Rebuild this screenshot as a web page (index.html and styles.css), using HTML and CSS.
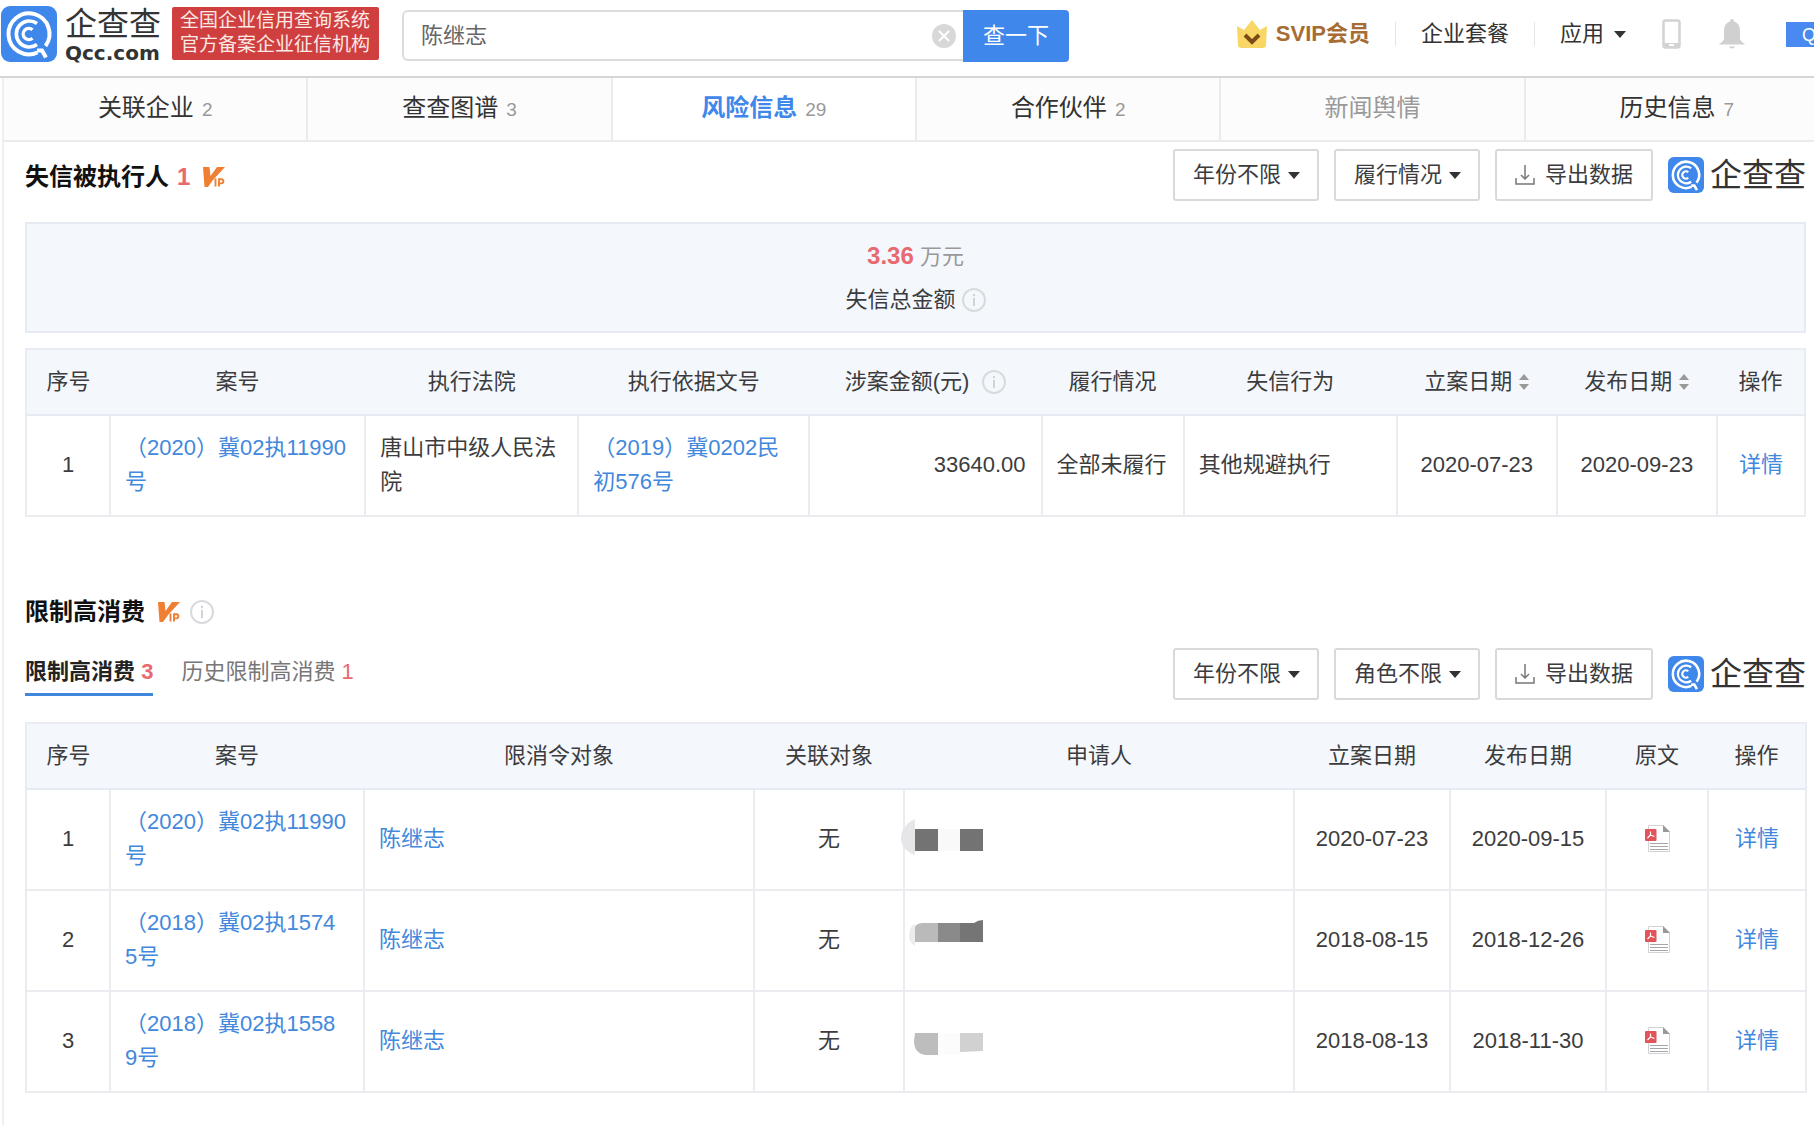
FILE: index.html
```html
<!DOCTYPE html>
<html lang="zh-CN">
<head>
<meta charset="utf-8">
<title>企查查 - 风险信息</title>
<meta name="viewport" content="width=device-width, initial-scale=1">
<link rel="stylesheet" href="styles.css">
</head>
<body>
<svg class="defs" aria-hidden="true">
  <symbol id="logo" viewBox="0 0 56 56">
    <rect width="56" height="56" rx="9" fill="#3f87ea"/>
    <g fill="none" stroke="#fff">
      <path d="M36.500 46.500A20.500 20.500 0 1 1 44.500 40" stroke-width="4"/>
      <path d="M36 38.500A13 13 0 1 1 36 17.500" stroke-width="3.600"/>
      <path d="M31.500 32.200A5.600 5.600 0 1 1 31.500 23.800" stroke-width="3.400"/>
      <path d="M36 44.500h5l4 7" stroke-width="4"/>
    </g>
  </symbol>
  <symbol id="vip" viewBox="0 0 22 20">
    <path d="M0 0h6.500l1 9L14 0h8L10 13l-5 7H1.500z" fill="#ee7f33"/>
    <path d="M12.500 11.500V19.500M16 19.500v-7.300h2.300a2 2 0 0 1 0 4.200H16" fill="none" stroke="#ee7f33" stroke-width="1.900"/>
  </symbol>
  <symbol id="info" viewBox="0 0 24 24">
    <circle cx="12" cy="12" r="11" fill="none" stroke="#d8dadd" stroke-width="2"/>
    <path d="M12 6v2.200M12 10v8" stroke="#d0d2d6" stroke-width="2"/>
  </symbol>
  <symbol id="download" viewBox="0 0 20 20">
    <path d="M10 0v14M6 10l4 4 4-4M1 13v6h18v-6" fill="none" stroke="#777" stroke-width="1.500"/>
  </symbol>
  <symbol id="pdf" viewBox="0 0 25 27">
    <path d="M3.500.5H18l6.500 6.500v19.500h-21z" fill="#fff" stroke="#d2d2d4"/>
    <path d="M18 0v7h7z" fill="#98989b"/>
    <rect y="4" width="11.500" height="12" rx="1" fill="#e25459"/>
    <path d="M5.500 6.500v3.500L2.500 13M5.500 10l4 1.500" fill="none" stroke="#fff" stroke-width="1.200"/>
    <path d="M5 18.500h18M5 21.500h18M5 24.500h18" stroke="#a6a6aa" stroke-width="1.100"/>
  </symbol>
</svg>

<header class="topbar">
  <a class="brand" href="#" aria-label="企查查首页">
    <svg class="brand-mark"><use href="#logo"/></svg>
    <span class="brand-name"><span class="brand-cn">企查查</span><span class="brand-en">Qcc.com</span></span>
  </a>
  <p class="slogan">全国企业信用查询系统<br>官方备案企业征信机构</p>
  <form class="search" role="search">
    <div class="search-box">
      <input class="search-input" type="text" value="陈继志" aria-label="搜索">
      <button class="search-clear" type="button" aria-label="清空">
        <svg width="24" height="24" viewBox="0 0 24 24"><circle cx="12" cy="12" r="12" fill="#d8d8d8"/><path d="M7 7l10 10M17 7L7 17" stroke="#fff" stroke-width="2"/></svg>
      </button>
    </div>
    <button class="search-go" type="submit">查一下</button>
  </form>
  <nav class="usernav" aria-label="用户导航">
    <a class="svip" href="#">
      <svg width="30" height="28" viewBox="0 0 30 28"><path d="M0 6l7 4 8-10 8 10 7-4-1 19q0 3-3 3H4q-3 0-3-3z" fill="#f8d766"/><path d="M8 15l7 7 7-7" fill="none" stroke="#7b4a16" stroke-width="4"/></svg>
      SVIP会员</a>
    <span class="divider"></span>
    <a class="plan" href="#">企业套餐</a>
    <span class="divider"></span>
    <button class="apps" type="button">应用<span class="caret"></span></button>
    <a class="phone" href="#" aria-label="手机版">
      <svg width="19" height="30" viewBox="0 0 19 30"><rect x="1.500" y="1.500" width="16" height="27" rx="2" fill="none" stroke="#d3d3d3" stroke-width="2.500"/><path d="M2 24h15v5H2z" fill="#d3d3d3"/><rect x="7" y="25" width="5" height="2" fill="#fff"/></svg>
    </a>
    <a class="bell" href="#" aria-label="消息">
      <svg width="26" height="30" viewBox="0 0 26 30"><path d="M13 0q2 0 2 2.500 6 2 6 9V20q1 3 4.500 4.500v1H.5v-1Q4 23 5 20v-8.500q0-7 6-9Q11 0 13 0zM10 27.500h6q-1 2-3 2t-3-2z" fill="#d0d0d0"/></svg>
    </a>
    <a class="account" href="#">Q</a>
  </nav>
</header>

<main class="page">
  <nav class="tabs" aria-label="信息分类">
    <a class="tab" href="#">关联企业<span class="tab-count">2</span></a>
    <a class="tab" href="#">查查图谱<span class="tab-count">3</span></a>
    <a class="tab is-active" href="#" aria-current="page">风险信息<span class="tab-count">29</span></a>
    <a class="tab" href="#">合作伙伴<span class="tab-count">2</span></a>
    <a class="tab is-muted" href="#">新闻舆情</a>
    <a class="tab" href="#">历史信息<span class="tab-count">7</span></a>
  </nav>

  <section class="block">
    <div class="block-head">
      <h2 class="title">失信被执行人 <em class="num">1</em><svg class="vip"><use href="#vip"/></svg></h2>
      <div class="tools">
        <label class="picker"><select aria-label="年份"><option>年份不限</option></select></label>
        <label class="picker"><select aria-label="履行情况"><option>履行情况</option></select></label>
        <button class="export" type="button"><svg width="20" height="20"><use href="#download"/></svg>导出数据</button>
        <span class="watermark"><svg width="36" height="36"><use href="#logo"/></svg>企查查</span>
      </div>
    </div>
    <div class="summary">
      <p><strong class="num">3.36</strong> <span class="unit">万元</span></p>
      <p class="summary-label">失信总金额<svg class="info"><use href="#info"/></svg></p>
    </div>
    <table class="data">
      <colgroup><col class="w84"><col class="w255"><col class="w213"><col class="w231"><col class="w232"><col class="w142"><col class="w213"><col class="w160"><col class="w160"><col class="w88"></colgroup>
      <thead>
        <tr><th>序号</th><th>案号</th><th>执行法院</th><th>执行依据文号</th><th><span class="th-flex has-info">涉案金额(元)<svg class="info"><use href="#info"/></svg></span></th><th>履行情况</th><th>失信行为</th><th><span class="th-flex">立案日期<span class="sort"></span></span></th><th><span class="th-flex">发布日期<span class="sort"></span></span></th><th>操作</th></tr>
      </thead>
      <tbody>
        <tr><td class="center">1</td><td><a href="#">（2020）冀02执11990<br>号</a></td><td>唐山市中级人民法院</td><td><a href="#">（2019）冀0202民初576号</a></td><td class="right">33640.00</td><td>全部未履行</td><td>其他规避执行</td><td class="center">2020-07-23</td><td class="center">2020-09-23</td><td class="center"><a href="#">详情</a></td></tr>
      </tbody>
    </table>
  </section>

  <section class="block">
    <h2 class="title">限制高消费<svg class="vip"><use href="#vip"/></svg><svg class="info"><use href="#info"/></svg></h2>
    <div class="block-head sub">
      <nav class="subtabs" aria-label="限制高消费分类">
        <a class="subtab is-active" href="#">限制高消费 <em class="num">3</em></a>
        <a class="subtab" href="#">历史限制高消费 <em class="num">1</em></a>
      </nav>
      <div class="tools">
        <label class="picker"><select aria-label="年份"><option>年份不限</option></select></label>
        <label class="picker"><select aria-label="角色"><option>角色不限</option></select></label>
        <button class="export" type="button"><svg width="20" height="20"><use href="#download"/></svg>导出数据</button>
        <span class="watermark"><svg width="36" height="36"><use href="#logo"/></svg>企查查</span>
      </div>
    </div>
    <table class="data">
      <colgroup><col class="w84"><col class="w254"><col class="w390"><col class="w150"><col class="w390"><col class="w156"><col class="w156"><col class="w102"><col class="w98"></colgroup>
      <thead>
        <tr><th>序号</th><th>案号</th><th>限消令对象</th><th>关联对象</th><th>申请人</th><th>立案日期</th><th>发布日期</th><th>原文</th><th>操作</th></tr>
      </thead>
      <tbody>
        <tr><td class="center">1</td><td><a href="#">（2020）冀02执11990<br>号</a></td><td><a href="#">陈继志</a></td><td class="center">无</td>
          <td class="masked"><svg class="mosaic" viewBox="0 0 82 44"><path d="M14 1v36Q0 32 0 20T14 1z" fill="#e6e6e9"/><path d="M37 11h22v22H37z" fill="#f9f9f9"/><path d="M14 11h23v22H14zM59 11h23v22H59z" fill="#737373"/></svg></td>
          <td class="center">2020-07-23</td><td class="center">2020-09-15</td><td class="center"><a href="#" aria-label="查看原文"><svg class="pdf"><use href="#pdf"/></svg></a></td><td class="center"><a href="#">详情</a></td></tr>
        <tr><td class="center">2</td><td><a href="#">（2018）冀02执1574<br>5号</a></td><td><a href="#">陈继志</a></td><td class="center">无</td>
          <td class="masked"><svg class="mosaic" viewBox="0 0 82 44"><path d="M14 5v22Q8 24 8 16t6-11z" fill="#ececec"/><path d="M14 8q2-4 8-4h15v19H14z" fill="#bababa"/><path d="M37 4h22v19H37z" fill="#8a8a8a"/><path d="M59 4h14q4-3 9-3v22H59z" fill="#757575"/></svg></td>
          <td class="center">2018-08-15</td><td class="center">2018-12-26</td><td class="center"><a href="#" aria-label="查看原文"><svg class="pdf"><use href="#pdf"/></svg></a></td><td class="center"><a href="#">详情</a></td></tr>
        <tr><td class="center">3</td><td><a href="#">（2018）冀02执1558<br>9号</a></td><td><a href="#">陈继志</a></td><td class="center">无</td>
          <td class="masked"><svg class="mosaic" viewBox="0 0 82 44"><path d="M14 13h23v22H24q-11-2-11-14z" fill="#bdbdbd"/><path d="M37 13h22v22H37z" fill="#fcfcfc"/><path d="M59 13h23v18l-23 1z" fill="#d1d1d1"/></svg></td>
          <td class="center">2018-08-13</td><td class="center">2018-11-30</td><td class="center"><a href="#" aria-label="查看原文"><svg class="pdf"><use href="#pdf"/></svg></a></td><td class="center"><a href="#">详情</a></td></tr>
      </tbody>
    </table>
  </section>
</main>
</body>
</html>
```
FILE: styles.css
```css
* { box-sizing: border-box; }

body {
  margin: 0;
  overflow-x: hidden;
  background: #fff;
  color: #3c3c3e;
  font: 22px/34px "Liberation Sans", "Noto Sans CJK SC", sans-serif;
}

a { color: #4288dc; text-decoration: none; }
h2, p { margin: 0; }
em { font-style: normal; }
svg { display: block; flex: none; }
button, input, select { font: inherit; color: inherit; margin: 0; }
button { cursor: pointer; }
.defs { position: absolute; width: 0; height: 0; }
.num { color: #e8696f; }

/* Top bar */
.topbar {
  display: flex;
  align-items: flex-start;
  height: 78px;
  border-bottom: 2px solid #d6d6d6;
  overflow: hidden;
  white-space: nowrap;
}
.brand { display: flex; gap: 8px; padding: 6px 0 0 1px; color: #333; }
.brand-mark { width: 56px; height: 56px; }
.brand-name { display: flex; flex-direction: column; width: 100px; }
.brand-cn { font-size: 32px; line-height: 36px; }
.brand-en { font: bold 20px/22px "DejaVu Sans", sans-serif; }
.slogan {
  margin: 7px 0 0 7px;
  padding: 2px 9px 3px 8px;
  border-radius: 2px;
  background: #cf3f3f;
  color: #fbe9e6;
  font-size: 19px;
  line-height: 24px;
}
.search { display: flex; width: 667px; margin: 10px 0 0 23px; }
.search-box {
  display: flex;
  flex: 1;
  align-items: center;
  height: 51px;
  padding-right: 7px;
  border: 2px solid #dcdcdc;
  border-right: 0;
  border-radius: 6px 0 0 6px;
}
.search-input {
  flex: 1;
  min-width: 0;
  padding: 0 17px;
  border: 0;
  outline: 0;
  background: none;
  color: #666;
}
.search-clear { padding: 0; border: 0; background: none; }
.search-go {
  width: 106px;
  height: 52px;
  padding: 0;
  border: 0;
  border-radius: 0 4px 4px 0;
  background: #3f87ea;
  color: #fff;
}
.usernav {
  display: flex;
  align-items: center;
  height: 52px;
  margin: 8px 0 0 auto;
  color: #333;
}
.svip { display: flex; align-items: center; gap: 9px; color: #a66c33; font-weight: bold; }
.divider { width: 1px; height: 24px; margin: 0 25px; background: #e4e4e4; }
.plan { color: #333; }
.apps { display: flex; align-items: center; gap: 10px; padding: 0; border: 0; background: none; }
.caret { border: 6px solid transparent; border-top: 7px solid #333; border-bottom: 0; }
.phone { margin-left: 36px; }
.bell { margin: 0 41px 0 38px; }
.account {
  width: 28px;
  height: 25px;
  padding-left: 16px;
  overflow: hidden;
  background: #4a8af0;
  color: #fff;
  font-size: 18px;
  line-height: 26px;
}

/* Category tabs */
.page { margin-left: 2px; padding-bottom: 32px; border-left: 2px solid #efeff0; }
.tabs {
  display: grid;
  grid-template-columns: repeat(6, 1fr);
  height: 64px;
  margin-right: -16px;
  border-bottom: 2px solid #ebebeb;
}
.tab {
  display: flex;
  align-items: center;
  justify-content: center;
  gap: 8px;
  padding-bottom: 2px;
  border-right: 2px solid #ebebeb;
  background: #fcfcfc;
  color: #333;
  font-size: 24px;
}
.tab.is-active { background: #fff; color: #3f87ea; font-weight: bold; }
.tab.is-muted { color: #999; }
.tab-count { padding-top: 3px; color: #999; font-size: 19px; font-weight: normal; }

/* Sections */
.block { margin: 0 8px 0 21px; }
.block + .block { margin-top: 75px; }
.block-head { display: flex; align-items: center; justify-content: space-between; height: 80px; padding-bottom: 14px; }
.title {
  display: flex;
  align-items: center;
  gap: 8px;
  color: #111;
  font-size: 24px;
  line-height: 40px;
}
.block-head .title { padding-top: 4px; }
.vip { width: 22px; height: 20px; margin: 0 2px 0 5px; }
.info { width: 24px; height: 24px; }
.tools { display: flex; align-items: center; gap: 15px; white-space: nowrap; }
.picker { position: relative; }
.picker::after {
  content: "";
  position: absolute;
  top: 23px;
  right: 19px;
  border: 6px solid transparent;
  border-top: 7px solid #333;
  border-bottom: 0;
  pointer-events: none;
}
.picker select, .export {
  display: block;
  height: 52px;
  border: 2px solid #d9d9d9;
  border-radius: 3px;
  background: #fff;
}
.picker select { width: 146px; padding: 0 0 0 18px; appearance: none; }
.export { display: flex; align-items: center; gap: 10px; width: 158px; padding: 0 0 0 18px; }
.watermark { display: flex; align-items: center; gap: 6px; font-size: 32px; color: #333; }

.summary {
  display: flex;
  flex-direction: column;
  align-items: center;
  gap: 9px;
  height: 111px;
  padding-top: 15px;
  border: 2px solid #e6ebf3;
  background: #f4f8fc;
}
.summary strong { font-size: 24px; }
.unit { color: #999; }
.summary-label { display: flex; align-items: center; gap: 6px; }
.summary + .data { margin-top: 15px; }

.subtabs { display: flex; gap: 28px; }
.subtab { height: 44px; line-height: 40px; color: #777; white-space: nowrap; }
.subtab.is-active { border-bottom: 3px solid #3f87dc; color: #222; font-weight: bold; }
.block-head.sub { height: 90px; padding: 0 0 7px; }

/* Data tables */
.data { width: 100%; table-layout: fixed; border-collapse: collapse; border: 2px solid #e9ecf2; }
.data th {
  height: 66px;
  padding: 0;
  border-bottom: 2px solid #e6eaf2;
  background: #f4f8fc;
  font-weight: normal;
  white-space: nowrap;
}
.data td { height: 101px; padding: 0 12px 2px 14px; border: 2px solid #eaecf0; }
.data .center { padding: 0 0 2px; text-align: center; }
.data .right { padding-right: 15px; text-align: right; }
.data .masked { padding: 0; }
.mosaic { width: 82px; height: 44px; margin-left: -4px; }
.pdf { width: 25px; height: 27px; margin: 0 auto; }
.th-flex { display: flex; align-items: center; justify-content: center; gap: 7px; }
.th-flex.has-info { gap: 13px; }
.sort { display: grid; gap: 4px; }
.sort::before, .sort::after { content: ""; border: 5px solid transparent; }
.sort::before { border-top: 0; border-bottom: 6px solid #999; }
.sort::after { border-bottom: 0; border-top: 6px solid #999; }

.w84 { width: 84px; }
.w88 { width: 88px; }
.w98 { width: 98px; }
.w102 { width: 102px; }
.w142 { width: 142px; }
.w150 { width: 150px; }
.w156 { width: 156px; }
.w160 { width: 160px; }
.w213 { width: 213px; }
.w231 { width: 231px; }
.w232 { width: 232px; }
.w254 { width: 254px; }
.w255 { width: 255px; }
.w390 { width: 390px; }
```
